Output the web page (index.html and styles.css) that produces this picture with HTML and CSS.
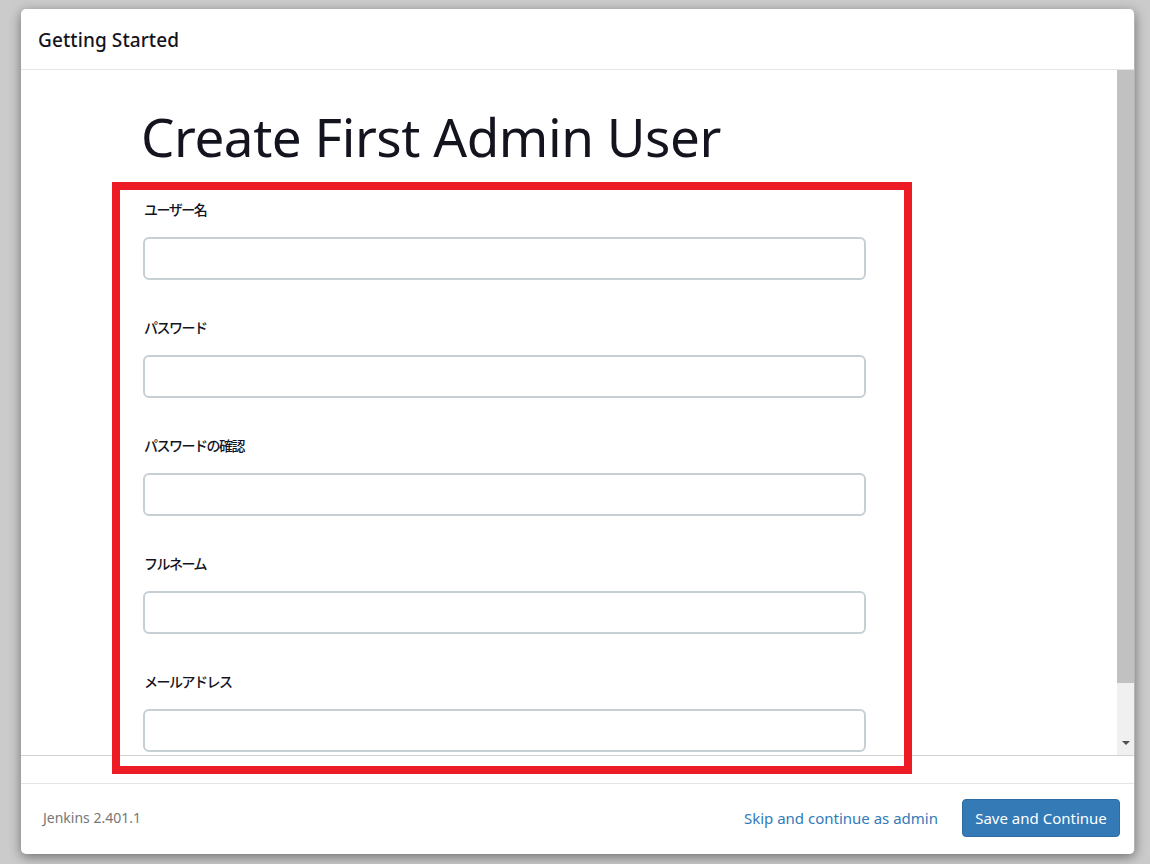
FILE: index.html
```html
<!DOCTYPE html>
<html lang="ja">
<head>
<meta charset="utf-8">
<title>Getting Started</title>
<link rel="stylesheet" href="styles.css">
</head>
<body>
<div class="dialog">
  <div class="dialog-header">
    <h4 class="dialog-title">Getting Started</h4>
  </div>
  <div class="dialog-main">
    <div class="frame">
      <div class="frame-content">
        <h1 class="page-title">Create First Admin User</h1>
        <form class="admin-form">
          <div class="field">
            <label class="field-label">ユーザー名</label>
            <input class="field-input" type="text">
          </div>
          <div class="field">
            <label class="field-label">パスワード</label>
            <input class="field-input" type="password">
          </div>
          <div class="field">
            <label class="field-label">パスワードの確認</label>
            <input class="field-input" type="password">
          </div>
          <div class="field">
            <label class="field-label">フルネーム</label>
            <input class="field-input" type="text">
          </div>
          <div class="field">
            <label class="field-label">メールアドレス</label>
            <input class="field-input" type="text">
          </div>
        </form>
      </div>
      <div class="scrollbar">
        <div class="scroll-thumb"></div>
        <div class="scroll-track"></div>
        <div class="scroll-arrow"></div>
      </div>
    </div>
  </div>
  <div class="dialog-footer">
    <span class="version">Jenkins 2.401.1</span>
    <div class="footer-actions">
      <a class="skip-link" href="#">Skip and continue as admin</a>
      <button class="btn-primary" type="button">Save and Continue</button>
    </div>
  </div>
</div>
<div class="highlight-box"></div>
</body>
</html>
```

FILE: styles.css
```css
html, body {
  margin: 0;
  padding: 0;
}
body {
  background: #cbcbcb;
  font-family: "Noto Sans", "Noto Sans CJK JP", sans-serif;
  color: #14141f;
  width: 1150px;
  height: 864px;
  overflow: hidden;
  position: relative;
  padding-top: 9px;
  box-sizing: border-box;
}
.dialog {
  margin-left: 21px;
  width: 1114px;
  height: 845px;
  background: #fff;
  border-radius: 5px;
  box-shadow: 0 3px 12px rgba(0,0,0,0.45);
  display: flex;
  flex-direction: column;
  overflow: hidden;
  box-sizing: border-box;
  border-right: 1px solid #b5b5b5;
}
.dialog-header {
  height: 60px;
  border-bottom: 1px solid #e5e5e5;
  display: flex;
  align-items: center;
  padding-left: 17px;
  flex: none;
}
.dialog-title {
  margin: 2px 0 0;
  font-size: 19px;
  font-weight: 500;
  letter-spacing: 0.1px;
  color: #14141f;
}
.dialog-main {
  height: 686px;
  border-bottom: 1px solid #d2d2d2;
  flex: none;
  box-sizing: border-box;
}
.frame {
  display: flex;
  height: 685px;
}
.frame-content {
  flex: 1;
  overflow: hidden;
  padding-left: 122px;
}
.page-title {
  margin: 32px 0 0 -2px;
  font-size: 53px;
  font-weight: 400;
  line-height: 70px;
  letter-spacing: -0.45px;
  color: #14141f;
}
.admin-form {
  margin-top: 27px;
  width: 723px;
}
.field {
  display: flex;
  flex-direction: column;
  margin-bottom: 37px;
}
.field-label {
  font-family: "Noto Sans CJK JP", sans-serif;
  font-size: 14px;
  font-weight: 500;
  line-height: 20px;
  letter-spacing: -1.5px;
  color: #14141f;
  margin: 0 0 18px 1px;
}
.field-input {
  height: 43px;
  box-sizing: border-box;
  border: 2px solid #c6cfd3;
  border-radius: 6px;
  background: #fff;
  margin: 0;
}
.scrollbar {
  width: 17px;
  flex: none;
  background: #f0f0f0;
  display: flex;
  flex-direction: column;
  align-items: center;
}
.scroll-thumb {
  width: 17px;
  height: 613px;
  background: #c1c1c1;
  flex: none;
}
.scroll-track {
  flex: 1;
}
.scroll-arrow {
  width: 0;
  height: 0;
  border-left: 4px solid transparent;
  border-right: 4px solid transparent;
  border-top: 4px solid #505050;
  margin-bottom: 10px;
}
.dialog-footer {
  margin-top: 27px;
  border-top: 1px solid #e5e5e5;
  flex: 1;
  display: flex;
  align-items: center;
  justify-content: space-between;
  padding: 0 14px 3px 22px;
}
.version {
  font-size: 14px;
  color: #777;
}
.footer-actions {
  display: flex;
  align-items: center;
  gap: 24px;
}
.skip-link {
  color: #337ab7;
  text-decoration: none;
  font-size: 15px;
}
.btn-primary {
  height: 38px;
  width: 158px;
  background: #337ab7;
  border: 1px solid #2e6da4;
  border-radius: 4px;
  color: #fff;
  font-family: "Noto Sans", sans-serif;
  font-size: 15px;
  padding: 0;
}
.highlight-box {
  position: absolute;
  left: 112px;
  top: 182px;
  width: 800px;
  height: 592px;
  box-sizing: border-box;
  border: 8px solid #ed1c24;
}
```
